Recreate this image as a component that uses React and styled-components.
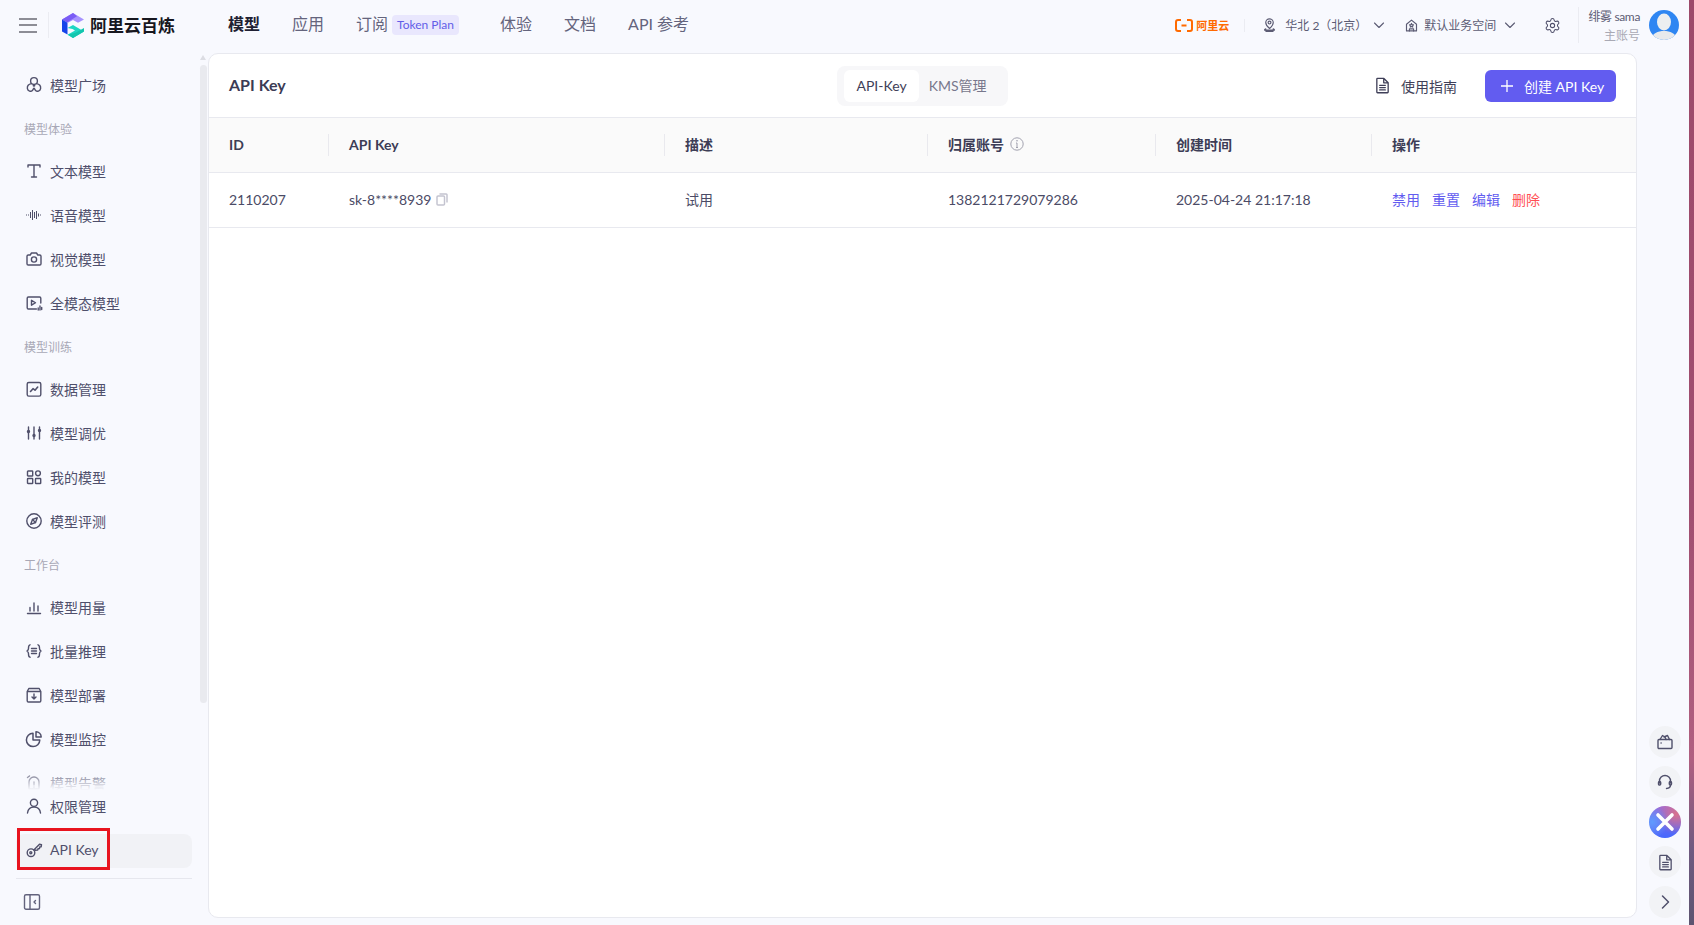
import React from "react";
import styled, { createGlobalStyle } from "styled-components";
import { Settings } from "lucide-react";

const Global = createGlobalStyle`
  html, body { margin: 0; padding: 0; height: 100%; overflow: hidden; }
  #root { height: 100%; }
  * { box-sizing: border-box; }
  body { font-family: Lato, "Noto Sans CJK SC", "Noto Sans", sans-serif; color: #4b4b66; background: #f8f9fe; }
`;

const Shell = styled.div`display: flex; width: 1694px; height: 925px; overflow: hidden;`;
const Page = styled.div`flex: 1; min-width: 0; display: flex; flex-direction: column; background: #f8f9fe;`;
const Wallpaper = styled.div`width: 5px; background: linear-gradient(180deg, #9c4a6a 0%, #a04e70 55%, #b05f80 82%, #6f5a80 92%, #5d5470 100%);`;

const Header = styled.header`height: 50px; flex: none; display: flex; align-items: center; padding: 0 10px 0 19px;`;
const Burger = styled.button`
  width: 18px; height: 15px; padding: 0; border: 0; background: none; display: flex; flex-direction: column; justify-content: space-between;
  span { height: 2px; background: #8d8d96; display: block; }
`;
const VLine = styled.i`display: block; width: 1px; height: ${p => p.$h}px; background: #ebecf2; margin: 0 ${p => p.$r}px 0 ${p => p.$l}px;`;
const Brand = styled.div`font-size: 17px; font-weight: 700; color: #17171f; margin-left: 6px; padding-bottom: 2px; white-space: nowrap;`;
const Nav = styled.nav`display: flex; align-items: center; gap: 32px; margin-left: 53px;`;
const NavItem = styled.span`font-size: 16px; line-height: 22px; padding-bottom: 2px; color: ${p => p.$on ? "#1f1f33" : "#64647d"}; font-weight: ${p => p.$on ? 700 : 400}; white-space: nowrap; display: flex; align-items: center;`;
const TokenTag = styled.span`height: 20px; border-radius: 4px; background: #e9e7fd; color: #625de8; font-size: 12px; font-weight: 400; line-height: 19px; margin: 2px 9px 0 4px; width: 67px; text-align: center; white-space: nowrap;`;
const HeaderRight = styled.div`margin-left: auto; display: flex; align-items: center; font-size: 12px; color: #5c5c74;`;
const AliLogo = styled.div`display: flex; align-items: center; gap: 3px; color: #ff6a00; font-size: 11px; font-weight: 700;`;
const MetaText = styled.span`white-space: nowrap; margin-left: ${p => p.$l || 0}px; font-size: 12px; padding-bottom: 2px;`;
const MetaIcon = styled.span`display: flex; margin-left: ${p => p.$l || 0}px;`;
const UserText = styled.div`display: flex; flex-direction: column; align-items: flex-end; line-height: 19px; font-size: 12px; margin-right: 9px; padding-top: 2px; white-space: nowrap; letter-spacing: -0.35px;`;
const Muted = styled.span`color: #a9a9b4; letter-spacing: 0;`;

const Body = styled.div`flex: 1; min-height: 0; display: flex;`;
const Sidebar = styled.aside`width: 208px; flex: none; display: flex; flex-direction: column; position: relative;`;
const Scroll = styled.div`
  flex: 1; min-height: 0; overflow: hidden; position: relative; padding-top: 14px;
  &::after { content: ""; position: absolute; left: 0; right: 16px; bottom: 0; height: 18px; background: linear-gradient(180deg, rgba(248,249,254,.2), #f8f9fe); }
`;
const Thumb = styled.div`position: absolute; left: 200px; top: 15px; width: 7px; height: 638px; border-radius: 4px; background: #e9eaef;`;
const Arrow = styled.div`position: absolute; left: 200px; top: 5px; width: 0; height: 0; border-left: 3.5px solid transparent; border-right: 3.5px solid transparent; border-bottom: 5px solid #dcdde3;`;
const Item = styled.div`
  height: 44px; display: flex; align-items: center; gap: 7px; padding: 0 0 3px 25px; font-size: 14px; color: #4f4f6b; white-space: nowrap;
  svg { flex: none; color: #50506b; }
`;
const Section = styled.div`height: 42px; line-height: 44px; padding-left: 24px; font-size: 12px; color: #a8a8b6;`;
const Bottom = styled.div`flex: none; height: 135px; position: relative; display: flex; flex-direction: column;`;
const BottomItem = styled.div`
  height: 34px; margin: ${p => p.$first ? 0 : "10px"} 16px 0 16px; display: flex; align-items: center; gap: 7px; padding: 0 0 3px 9px; font-size: 14px; color: #4f4f6b; border-radius: 8px; white-space: nowrap;
  background: ${p => p.$on ? "#f1f2f6" : "transparent"};
  svg { flex: none; color: #50506b; }
`;
const Rule = styled.div`height: 1px; background: #e6e7ee; margin: 10px 16px 0;`;
const Collapse = styled.div`flex: 1; display: flex; align-items: center; padding-left: 23px; color: #63637d;`;
const Mark = styled.div`position: absolute; left: 17px; top: 38px; width: 93px; height: 42px; border: 3px solid #e8141f; pointer-events: none;`;

const Card = styled.main`flex: 1; min-width: 0; margin: 3px 0 7px; background: #fff; border: 1px solid #e8e9ef; border-radius: 10px; overflow: hidden;`;
const CardHead = styled.div`height: 63px; padding: 0 20px; display: grid; grid-template-columns: 1fr auto 1fr; align-items: center;`;
const Title = styled.div`font-size: 16px; font-weight: 700; color: #3b3b55; padding-bottom: 2px;`;
const Tabs = styled.div`display: flex; padding: 4px 7px; border-radius: 8px; background: #f7f7f9;`;
const Tab = styled.div`height: 32px; line-height: 32px; padding: 0 ${p => p.$on ? 12 : 0}px; margin-right: ${p => p.$on ? 10 : 14}px; font-size: 14px; border-radius: 6px; background: ${p => p.$on ? "#fff" : "transparent"}; color: ${p => p.$on ? "#3f3f58" : "#77778c"};`;
const Actions = styled.div`display: flex; align-items: center; justify-content: flex-end;`;
const Guide = styled.div`display: flex; align-items: center; gap: 10px; font-size: 14px; color: #3f3f58; margin-right: 28px;`;
const Primary = styled.button`height: 32px; width: 131px; border: 0; border-radius: 6px; background: #625cf0; color: #fff; font: inherit; font-size: 14px; display: flex; align-items: center; gap: 10px; padding: 0 0 0 15px; white-space: nowrap;`;

const Cols = "120px 336px 263px 228px 216px 1fr";
const Head = styled.div`height: 56px; display: grid; grid-template-columns: ${Cols}; background: #fafafa; border-top: 1px solid #e8e9ef; border-bottom: 1px solid #e8e9ef;`;
const Row = styled.div`height: 55px; display: grid; grid-template-columns: ${Cols}; border-bottom: 1px solid #e8e9ef;`;
const HeadCell = styled.div`display: flex; align-items: center; justify-content: space-between; padding-left: 20px; font-size: 14px; font-weight: 700; color: #3d3d56;`;
const HeadLabel = styled.span`display: flex; align-items: center; gap: 6px; padding-bottom: 2px;`;
const Sep = styled.i`display: block; width: 1px; height: 22px; background: #e9e9ee;`;
const Cell = styled.div`display: flex; align-items: center; gap: 5px; padding: 0 0 2px 20px; font-size: 14px; color: #4b4b66;`;
const Links = styled(Cell)`gap: 12px;`;
const LinkBtn = styled.a`font-size: 14px; color: ${p => p.$danger ? "#ff4f55" : "#625cf0"};`;

const Rail = styled.aside`width: 52px; flex: none; display: flex; flex-direction: column; justify-content: flex-end; gap: 8px; padding: 0 0 7px 12px;`;
const RailBtn = styled.div`width: 32px; height: 32px; border-radius: 50%; background: #f2f3f6; color: #50506b; display: flex; align-items: center; justify-content: center;`;
const RailFancy = styled(RailBtn)`background-image: radial-gradient(circle at 10% 50%, #5f9bff 0, transparent 50%), radial-gradient(circle at 85% 25%, #d9708c 0, transparent 55%), linear-gradient(180deg, #9d6cd8, #4468ff);`;

const Ico = ({ s = 18, children, w = 1.4, ...r }) => (
  <svg width={s} height={s} viewBox="0 0 18 18" fill="none" stroke="currentColor" strokeWidth={w} strokeLinecap="round" strokeLinejoin="round" {...r}>{children}</svg>
);

const IPlaza = () => <Ico><circle cx="9" cy="5" r="3.4"/><path d="M6.4 7.6C3.5 8 2 10 2.4 12.6c.5 2.7 3.6 3.6 5.2 1.6.9-1.1.9-2 1.4-2s.5.9 1.4 2c1.6 2 4.7 1.1 5.2-1.6.4-2.6-1.100-4.600-4-5"/><circle cx="9" cy="9.4" r=".7"/></Ico>;
const IText = () => <Ico><path d="M3 5V3h12v2M9 3v12M6.500 15h5"/></Ico>;
const IAudio = () => <Ico w={1} strokeLinecap="butt"><path d="M1.500 8.500v1M3.500 8.500v1M5.500 6v6M7.500 4v10M9.500 6v6M11.500 5v8M13.500 7.500v3M15.500 8.500v1"/></Ico>;
const ICam = () => <Ico><path d="M2 6.200c0-.8.500-1.200 1.200-1.200h2L6.500 3h5l1.300 2h2c.7 0 1.200.4 1.200 1.200v7.600c0 .7-.5 1.200-1.200 1.200H3.200c-.7 0-1.200-.5-1.200-1.200z"/><circle cx="9" cy="9.500" r="2.600"/></Ico>;
const IMulti = () => <Ico><path d="M15.800 9V4.200C15.800 3.500 15.300 3 14.600 3H3.400C2.700 3 2.200 3.500 2.200 4.200v9.600c0 .7.500 1.200 1.200 1.200h8"/><path d="M6.500 6.300v4.900l4-2.450z"/><path d="M13.200 14v2M15 12v4M16.700 13.500v2"/></Ico>;
const IData = () => <Ico><rect x="2.200" y="2.500" width="13.600" height="13.600" rx="1.600"/><path d="M5.500 11.500l2.500-2.800 2 1.500 2.700-3.200" strokeWidth="1.600"/></Ico>;
const ITune = () => <Ico><path d="M3.500 3v3M3.500 9v6M9 3v7M9 13v2M14.500 3v2M14.500 8v7"/><circle cx="3.500" cy="7.500" r="1" fill="currentColor"/><circle cx="9" cy="11.500" r="1" fill="currentColor"/><circle cx="14.500" cy="6.500" r="1" fill="currentColor"/></Ico>;
const IMine = () => <Ico><rect x="2.500" y="3" width="5.200" height="5" rx=".6"/><rect x="2.500" y="10.500" width="5.200" height="5" rx=".6"/><rect x="10.500" y="10.500" width="5.200" height="5" rx=".6"/><circle cx="13" cy="5.300" r="2.400"/></Ico>;
const ICompass = () => <Ico><circle cx="9" cy="9" r="7.200"/><path d="M12.300 5.700l-1.800 4.800-4.800 1.800 1.800-4.800z"/><path d="M7.500 7.500l3 3"/></Ico>;
const IBars = () => <Ico><path d="M2.500 15.500h13M5 13V9.500M9 13V5M13 13V8"/></Ico>;
const IBatch = () => <Ico><path d="M5 2.800C3.300 3.300 3.500 5 3.500 6.500c0 1.400-.8 2-1.500 2.500.7.500 1.500 1.100 1.500 2.500 0 1.500-.2 3.200 1.500 3.700M13 2.800c1.700.5 1.500 2.200 1.500 3.700 0 1.400.8 2 1.500 2.500-.7.500-1.500 1.100-1.500 2.500 0 1.500.2 3.200-1.500 3.700M6.500 6.500h5M6.500 9h5M6.500 11.500h5"/></Ico>;
const IDeploy = () => <Ico><path d="M3.800 2.500h10.400l1.600 3v9.200c0 .7-.5 1.300-1.200 1.300H3.400c-.7 0-1.200-.6-1.200-1.300V5.500zM2.200 5.500h13.600M9 8v5M7 11l2 2 2-2"/></Ico>;
const IPie = () => <Ico w={1.5}><path d="M8 3.200a6.700 6.700 0 1 0 6.800 6.800H8z"/><path d="M11 1.800V7h5.200A5.500 5.500 0 0 0 11 1.800z"/></Ico>;
const IBell = () => <Ico><path d="M4 15V8a5 5 0 0 1 10 0v7zM2.500 3.500L4.500 2M9 8v3M9 13v.2"/></Ico>;
const IUser = () => <Ico><circle cx="9" cy="5.800" r="3.600"/><path d="M2.500 16c.5-3.800 3-6 6.500-6s6 2.200 6.500 6"/></Ico>;
const IKey = () => <Ico><circle cx="6" cy="11.700" r="3.800"/><circle cx="5.800" cy="11.800" r="1"/><path d="M8.800 9L14.500 3.200l2 .5-.3 2-1.500.3-.2 1.500-1.500.3-.3 1.200-2.500.3"/></Ico>;
const IPanel = () => <Ico s={18}><rect x="1.500" y="1.800" width="15" height="14.400" rx="1.500"/><path d="M7 2v14M12.500 7.500L11 9l1.500 1.500"/></Ico>;
const IChev = () => <Ico s={12} viewBox="0 0 12 12" w={1.100}><path d="M1.500 4l4.500 4.500L10.500 4"/></Ico>;
const IPin = () => <Ico s={15}><path d="M9 12.500s-4.500-3.500-4.500-7a4.500 4.500 0 0 1 9 0c0 3.500-4.500 7-4.500 7z"/><circle cx="9" cy="5.500" r="1.700"/><path d="M4.500 13c-1.200.5-1.500 1-1.500 1.500h12c0-.5-.3-1-1.500-1.500l-.2 3H4.700z"/></Ico>;
const IHome = () => <Ico s={15}><path d="M3 15.500V7.500L9 2.500l6 5v8z"/><path d="M9 6.500l.8 1.500 1.600.2-1.200 1.100.3 1.600-1.500-.8-1.500.8.3-1.600-1.200-1.100 1.600-.2zM6.500 15.500v-2.500h5v2.500"/></Ico>;
const IDoc = () => <Ico s={17}><path d="M3 2.200c0-.4.300-.7.700-.7h6.800l4.500 4.500v10c0 .4-.3.700-.7.700H3.700c-.4 0-.7-.3-.7-.7zM10.300 1.700v4.500H15M6 8.800h6M6 11.200h6M6 13.700h6"/></Ico>;
const ICopy = () => <svg width="12" height="13" viewBox="0 0 12 13" fill="none" stroke="#c4c4d0" strokeWidth="1.500"><rect x="1" y="3" width="7.500" height="9" rx="1"/><path d="M3.500 1h6.700c.4 0 .8.400.8.800v7.700"/></svg>;
const IInfo = () => <svg width="14" height="14" viewBox="0 0 14 14" fill="none" stroke="#a2a2af" strokeWidth="1"><circle cx="7" cy="7" r="6.200"/><path d="M7 6v4.500M6 10.500h2M6 6h1"/><circle cx="7" cy="3.800" r=".4"/></svg>;
const IPlus = () => <svg width="14" height="14" viewBox="0 0 14 14" stroke="#fff" strokeWidth="1.300"><path d="M7 1v12M1 7h12"/></svg>;
const IBag = () => <Ico s={18}><rect x="2" y="6.500" width="14" height="9" rx="1"/><path d="M4 6.500L6.500 2.500 9 4l1 2.500M8 4l3.500-1.500 2 4"/><path d="M5 10h.2"/></Ico>;
const IHead = () => <Ico s={18}><path d="M3.500 10V8a5.500 5.500 0 0 1 11 0v2M14.500 12c0 2-1.500 3.300-4 3.500"/><rect x="2.500" y="8.500" width="2.200" height="3.500" rx="1"/><rect x="13.300" y="8.500" width="2.200" height="3.500" rx="1"/></Ico>;
const IRight = () => <Ico s={18} w={1.500}><path d="M6.500 3l6 6-6 6"/></Ico>;

const Logo = () => (
  <svg width="22" height="25" viewBox="0 0 22 25">
    <path d="M0 6.500L11 0l11 6.500-6 3.300L11 7 6 9.800z" fill="#a793ff" />
    <path d="M11 0L0 6.500l5 3L15 3.200z" fill="#7a5cf5" />
    <path d="M0 6.500v12l5.500 3V9.800z" fill="#1544ea" />
    <path d="M5.500 15L11 12l11 6.500-11 6.500-5.500-3.300L13 17.500 10.500 16z" fill="#1fd6c4" />
    <path d="M6 21.800L11 25l11-6.500V15l-8 4.500z" fill="#12c6ae" />
  </svg>
);
const AliMark = () => (
  <svg width="18" height="13" viewBox="0 0 18 13" fill="none" stroke="#ff6a00" strokeWidth="2"><path d="M6 1H3Q1 1 1 3v7q0 2 2 2h3M12 1h3q2 0 2 2v7q0 2-2 2h-3M6.500 6.500h5" /></svg>
);
const Avatar = () => (
  <svg width="30" height="30" viewBox="0 0 30 30">
    <defs><clipPath id="av"><circle cx="15" cy="15" r="15" /></clipPath></defs>
    <g clipPath="url(#av)">
      <rect width="30" height="30" fill="#2f86f2" />
      <ellipse cx="15" cy="12" rx="7" ry="8.500" fill="#eceef0" />
      <path d="M2 30c1-7 7-9 13-9s12 2 13 9z" fill="#e8eaec" />
    </g>
  </svg>
);
const Cross = () => <svg width="22" height="22" viewBox="0 0 22 22" stroke="#fff" strokeWidth="3.600" strokeLinecap="round"><path d="M4 4l14 14M18 4L4 18" /></svg>;

const groups = [
  [null, [["模型广场", IPlaza]]],
  ["模型体验", [["文本模型", IText], ["语音模型", IAudio], ["视觉模型", ICam], ["全模态模型", IMulti]]],
  ["模型训练", [["数据管理", IData], ["模型调优", ITune], ["我的模型", IMine], ["模型评测", ICompass]]],
  ["工作台", [["模型用量", IBars], ["批量推理", IBatch], ["模型部署", IDeploy], ["模型监控", IPie], ["模型告警", IBell]]],
];
const cols = [["ID"], ["API Key"], ["描述"], ["归属账号", true], ["创建时间"], ["操作"]];

export default function App() {
  return (
    <Shell>
      <Global />
      <Page>
        <Header>
          <Burger><span /><span /><span /></Burger>
          <VLine $h={26} $l={11} $r={13} />
          <Logo />
          <Brand>阿里云百炼</Brand>
          <Nav>
            <NavItem $on>模型</NavItem>
            <NavItem>应用</NavItem>
            <NavItem>订阅<TokenTag>Token Plan</TokenTag></NavItem>
            <NavItem>体验</NavItem>
            <NavItem>文档</NavItem>
            <NavItem>API 参考</NavItem>
          </Nav>
          <HeaderRight>
            <AliLogo><AliMark />阿里云</AliLogo>
            <VLine $h={13} $l={15} $r={17} />
            <IPin />
            <MetaText $l={8}>华北 2（北京）</MetaText>
            <MetaIcon $l={6}><IChev /></MetaIcon>
            <MetaIcon $l={19}><IHome /></MetaIcon>
            <MetaText $l={5}>默认业务空间</MetaText>
            <MetaIcon $l={8}><IChev /></MetaIcon>
            <MetaIcon $l={28}><Settings size={17} strokeWidth={1.5} color="#50506b" /></MetaIcon>
            <VLine $h={36} $l={17} $r={9} />
            <UserText><span>绯雾 sama</span><Muted>主账号</Muted></UserText>
            <Avatar />
          </HeaderRight>
        </Header>
        <Body>
          <Sidebar>
            <Arrow />
            <Scroll>
              {groups.map(([label, items], i) => (
                <div key={i}>
                  {label && <Section>{label}</Section>}
                  {items.map(([t, I]) => <Item key={t}><I />{t}</Item>)}
                </div>
              ))}
            </Scroll>
            <Thumb />
            <Bottom>
              <BottomItem $first><IUser />权限管理</BottomItem>
              <BottomItem $on><IKey />API Key</BottomItem>
              <Rule />
              <Collapse><IPanel /></Collapse>
              <Mark />
            </Bottom>
          </Sidebar>
          <Card>
            <CardHead>
              <Title>API Key</Title>
              <Tabs>
                <Tab $on>API-Key</Tab>
                <Tab>KMS管理</Tab>
              </Tabs>
              <Actions>
                <Guide><IDoc />使用指南</Guide>
                <Primary><IPlus />创建 API Key</Primary>
              </Actions>
            </CardHead>
            <Head>
              {cols.map(([t, info], i) => (
                <HeadCell key={t}>
                  <HeadLabel>{t}{info && <IInfo />}</HeadLabel>
                  {i < cols.length - 1 && <Sep />}
                </HeadCell>
              ))}
            </Head>
            <Row>
              <Cell>2110207</Cell>
              <Cell>sk-8****8939<ICopy /></Cell>
              <Cell>试用</Cell>
              <Cell>1382121729079286</Cell>
              <Cell>2025-04-24 21:17:18</Cell>
              <Links>
                <LinkBtn>禁用</LinkBtn><LinkBtn>重置</LinkBtn><LinkBtn>编辑</LinkBtn><LinkBtn $danger>删除</LinkBtn>
              </Links>
            </Row>
          </Card>
          <Rail>
            <RailBtn><IBag /></RailBtn>
            <RailBtn><IHead /></RailBtn>
            <RailFancy><Cross /></RailFancy>
            <RailBtn><IDoc /></RailBtn>
            <RailBtn><IRight /></RailBtn>
          </Rail>
        </Body>
      </Page>
      <Wallpaper />
    </Shell>
  );
}
